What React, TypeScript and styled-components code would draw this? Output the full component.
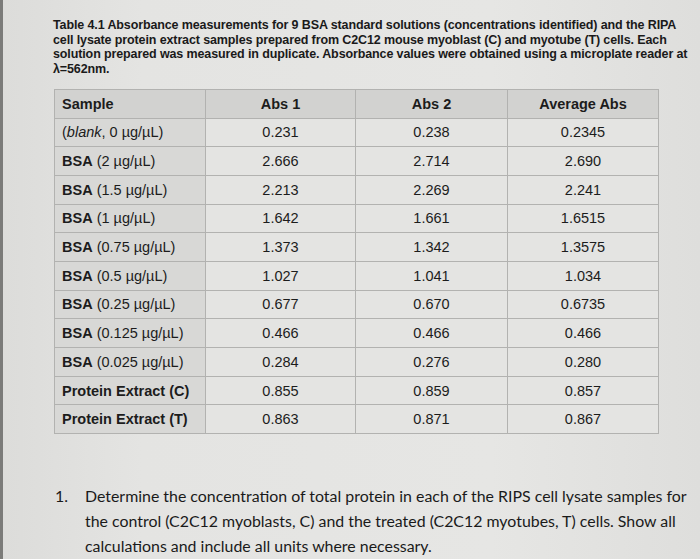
import styled, { createGlobalStyle } from "styled-components"

type RowType = {
    sample: string
    bold?: string
    italic?: string
    abs1: string
    abs2: string
    avg: string
}

const rows: RowType[] = [
    { sample: ", 0 µg/µL)", italic: "blank", abs1: "0.231", abs2: "0.238", avg: "0.2345" },
    { bold: "BSA", sample: " (2 µg/µL)", abs1: "2.666", abs2: "2.714", avg: "2.690" },
    { bold: "BSA", sample: " (1.5 µg/µL)", abs1: "2.213", abs2: "2.269", avg: "2.241" },
    { bold: "BSA", sample: " (1 µg/µL)", abs1: "1.642", abs2: "1.661", avg: "1.6515" },
    { bold: "BSA", sample: " (0.75 µg/µL)", abs1: "1.373", abs2: "1.342", avg: "1.3575" },
    { bold: "BSA", sample: " (0.5 µg/µL)", abs1: "1.027", abs2: "1.041", avg: "1.034" },
    { bold: "BSA", sample: " (0.25 µg/µL)", abs1: "0.677", abs2: "0.670", avg: "0.6735" },
    { bold: "BSA", sample: " (0.125 µg/µL)", abs1: "0.466", abs2: "0.466", avg: "0.466" },
    { bold: "BSA", sample: " (0.025 µg/µL)", abs1: "0.284", abs2: "0.276", avg: "0.280" },
    { bold: "Protein Extract (C)", sample: "", abs1: "0.855", abs2: "0.859", avg: "0.857" },
    { bold: "Protein Extract (T)", sample: "", abs1: "0.863", abs2: "0.871", avg: "0.867" },
]

const GlobalStyle = createGlobalStyle`
    html, body {
        margin: 0;
        padding: 0;
        background: #e3e3e1;
    }
`

const Page = styled.div`
    height: 559px;
    box-sizing: border-box;
    border-left: 3px solid #7b7b79;
    padding: 18px 0 0 50px;
    background: linear-gradient(90deg, #dcdcda 0%, #e4e4e2 20%, #e6e6e4 70%, #dededc 100%);
    overflow: hidden;
`

const Caption = styled.p`
    margin: 0;
    white-space: nowrap;
    font-family: "Liberation Sans", Arial, sans-serif;
    font-weight: bold;
    font-size: 12.5px;
    line-height: 14.7px;
    letter-spacing: -0.12px;
    color: #1a1a1a;
`

const Table = styled.table`
    margin: 12px 0 0 1px;
    border-collapse: collapse;
    table-layout: fixed;
    font-family: "Liberation Sans", Arial, sans-serif;
    color: #1c1c1c;
    border: 1px solid #a9a9a7;
`

const Row = styled.tr`
    height: 28.7px;
`

const Cell = styled.td<{ $head?: boolean; $first?: boolean }>`
    padding: 0 0 0 ${p => (p.$first ? "7px" : "0")};
    box-sizing: border-box;
    border: 1px solid #b2b2b0;
    text-align: ${p => (p.$first ? "left" : "center")};
    font-weight: ${p => (p.$head ? "bold" : "normal")};
    font-size: 14.5px;
    background: ${p => (p.$head ? "#d2d2d0" : p.$first ? "#d8d8d6" : "#e4e4e2")};
`

const Question = styled.div`
    margin-top: 49px;
    display: flex;
    padding-left: 2px;
    font-family: Lato, "Open Sans", sans-serif;
    font-size: 15.9px;
    line-height: 25px;
    color: #1a1a1a;
`

const QuestionNum = styled.span`
    width: 30px;
    flex: none;
`

export default function App() {
    return (
        <>
            <GlobalStyle />
            <Page>
                <Caption>
                    Table 4.1 Absorbance measurements for 9 BSA standard solutions (concentrations identified) and the RIPA<br />
                    cell lysate protein extract samples prepared from C2C12 mouse myoblast (C) and myotube (T) cells. Each<br />
                    solution prepared was measured in duplicate. Absorbance values were obtained using a microplate reader at<br />
                    λ=562nm.
                </Caption>
                <Table>
                    <colgroup>
                        <col style={{ width: 151 }} />
                        <col style={{ width: 150 }} />
                        <col style={{ width: 152 }} />
                        <col style={{ width: 151 }} />
                    </colgroup>
                    <tbody>
                        <Row>
                            <Cell $head $first>Sample</Cell>
                            <Cell $head>Abs 1</Cell>
                            <Cell $head>Abs 2</Cell>
                            <Cell $head>Average Abs</Cell>
                        </Row>
                        {rows.map((r, i) => (
                            <Row key={i}>
                                <Cell $first>
                                    {r.italic ? <>(<i>{r.italic}</i></> : null}
                                    {r.bold ? <b>{r.bold}</b> : null}
                                    {r.sample}
                                </Cell>
                                <Cell>{r.abs1}</Cell>
                                <Cell>{r.abs2}</Cell>
                                <Cell>{r.avg}</Cell>
                            </Row>
                        ))}
                    </tbody>
                </Table>
                <Question>
                    <QuestionNum>1.</QuestionNum>
                    <div>
                        Determine the concentration of total protein in each of the RIPS cell lysate samples for<br />
                        the control (C2C12 myoblasts, C) and the treated (C2C12 myotubes, T) cells. Show all<br />
                        calculations and include all units where necessary.
                    </div>
                </Question>
            </Page>
        </>
    )
}
